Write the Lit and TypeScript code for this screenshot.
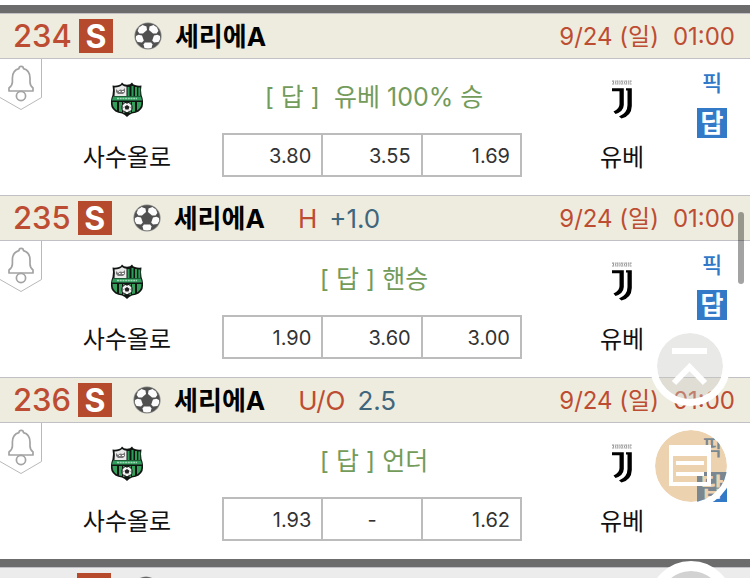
import { LitElement, html, css, svg, nothing } from "lit";
import { customElement, property } from "lit/decorators.js";

interface Match {
  no: number;
  league: string;
  rule?: string;
  value?: string;
  date: string;
  time: string;
  home: string;
  away: string;
  answer: string;
  odds: string[];
}

const base = { league: "세리에A", date: "9/24 (일)", time: "01:00", home: "사수올로", away: "유베" };

const matches: Match[] = [
  { ...base, no: 234, answer: "[ 답 ]  유베 100% 승", odds: ["3.80", "3.55", "1.69"] },
  { ...base, no: 235, rule: "H", value: "+1.0", answer: "[ 답 ] 핸승", odds: ["1.90", "3.60", "3.00"] },
  { ...base, no: 236, rule: "U/O", value: "2.5", answer: "[ 답 ] 언더", odds: ["1.93", "-", "1.62"] },
];

const ball = svg`<svg class="ball" viewBox="0 0 28 28" aria-hidden="true">
  <circle cx="14" cy="14" r="13.600" fill="#8c8c8a"/>
  <circle cx="14" cy="14" r="12.800" fill="#505050"/>
  <g fill="#fcfcfc">
    <path d="M5 5.500 8.500 3 12.500 4.500 13 8 9 11.500 5.500 11.500 3.600 9Z"/>
    <path d="M23 5.500 19.500 3 15.500 4.500 15 8 19 11.500 22.500 11.500 24.400 9Z"/>
    <path d="M2 14 4.500 12.800 8 13.500 9.800 18.500 8 20.500 3.500 20 1.800 17Z"/>
    <path d="M26 14 23.500 12.800 20 13.500 18.200 18.500 20 20.500 24.500 20 26.200 17Z"/>
    <path d="M10.800 20.500H17.200L18.500 22.500 17.500 26 14 26.600 10.500 26 9.500 22.500Z"/>
  </g>
</svg>`;

const bell = svg`<svg viewBox="0 0 42 52" width="42" height="52" aria-hidden="true" fill="none">
  <path d="M41.500 0V38.500L21 50.500 0 38.500" stroke="#b9b9bb"/>
  <g stroke="#a3a3a3" stroke-width="1.700">
    <path d="M19 9.600C19 6.600 23.400 6.600 23.400 9.600 28 10.800 30 14.500 30 19V23C30 26 31 27.500 33 29V32H9V29C11 27.500 12.400 26 12.400 23V19C12.400 14.500 14.400 10.800 19 9.600Z" stroke-linejoin="round"/>
    <circle cx="21" cy="37" r="4.600"/>
  </g>
</svg>`;

const sassuolo = svg`<svg viewBox="0 0 34 35" width="34" height="35" role="img" aria-label="사수올로">
  <path d="M2.500 3.500Q6 4 9 3 11 2.500 12 .5 13.500 2.800 17 2.800 20.500 2.800 22 .5 23 2.500 25 3 28 4 31.500 3.500 30.500 8 31.500 13 34 19 32.500 25 30 30.500 22 31.500 19 32.500 17 35 15 32.500 12 31.500 4 30.500 1.500 25 0 19 2.500 13 3.500 8 2.500 3.500Z" fill="#101512"/>
  <path d="M4.500 5.500Q10 5 12 3 14 4.500 16.500 4.800V14H4.500Q5.300 9 4.500 5.500Z" fill="#e9eae9"/>
  <path d="M6 7 8 9 10 7.500 13 8 15 6V10L13 12H8L6 10ZM8 13V11M13 13V11" fill="#777"/>
  <path d="M9 9.500H10.500M12 9.500H14" stroke="#fff"/>
  <path d="M18.500 5V14M22.500 4V14M26 5V14M29.300 5.500V14" stroke="#2c9c57" stroke-width="2"/>
  <path d="M3 14.500H31L32 18.500H2Z" fill="#2f9d5b"/>
  <path d="M7 16.500H27" stroke="#a4d6b8" stroke-width="1.600" stroke-dasharray="2 .7"/>
  <path d="M2.500 20H7V28.500Q2.500 26 2.500 20ZM9 20H12V30L9 29.500ZM22 20H25V29.500L22 30ZM27 20H31.500Q31.500 26 27 28.500ZM13 20H21V31H13Z" fill="#34a05c"/>
  <circle cx="17" cy="25.500" r="5.200" fill="#f4f4f4" stroke="#111"/>
  <path d="M17 23 19.500 24.800 18.500 27.500H15.500L14.500 24.800ZM15.500 20.500H18.500L17 22ZM12.500 24V27L13.500 25.500ZM21.500 24V27L20.500 25.500ZM14 29.500 15 28.500 16 30.500ZM20 29.500 19 28.500 18 30.500Z" fill="#222"/>
</svg>`;

const juventus = svg`<svg viewBox="0 0 20 39" width="20" height="39" role="img" aria-label="유베">
  <path d="M0 1.200H20M0 4H20" stroke="#999" stroke-width="1.200" stroke-dasharray="2 .8 1 .6"/>
  <path d="M1 2.600H19" stroke="#888" stroke-width="1.600" stroke-dasharray=".9 1.300"/>
  <path d="M0 8.200H11.800V25Q11.500 31.500 3.500 34L1.500 31.500Q7.500 29 7.500 24V11.200H0Z"/>
  <path d="M14 8.200H19.800V26Q19.500 36 9.500 38.500L7 36.500Q15.500 33 15.500 25V10.500H14Z"/>
</svg>`;

@customElement("match-header")
export class MatchHeader extends LitElement {
  @property({ attribute: false }) match?: Match;

  static styles = css`
    :host {
      display: flex;
      align-items: center;
      height: 44px;
      padding: 0 15px 0 13px;
      background: #eeecdf;
      border-top: 1px solid #c1c0c4;
      border-bottom: 1px solid #c1c0c4;
      color: #bd4d32;
      font-size: 24px;
      line-height: 32px;
      white-space: pre;
    }
    :host([muted]) { background: #ececec; }
    .no { min-width: 57px; font-size: 31px; font-weight: 500; }
    .badge {
      display: grid;
      place-items: center;
      width: 34px;
      height: 34px;
      margin: 0 21px 0 7px;
      background: #b54a2d;
      color: #fff;
      font-size: 32px;
      font-weight: 700;
      line-height: 36px;
    }
    .ball { width: 28px; height: 28px; margin-right: 13px; }
    .league, .rule, .value { padding-top: 2px; font-size: 26px; }
    .league { color: #000; font-weight: 700; }
    .rule { margin-left: 33px; }
    .value { margin-left: 12px; color: #40667c; }
    .when { margin-left: auto; display: flex; align-items: baseline; gap: 14px; padding-top: 2px; }
  `;

  render() {
    const m = this.match;
    return html`<span class="no">${m?.no}</span><span class="badge">${m ? "S" : nothing}</span>${ball}
      ${m ? html`<span class="league">${m.league}</span>` : nothing}
      ${m?.rule ? html`<span class="rule">${m.rule}</span><span class="value">${m.value}</span>` : nothing}
      ${m ? html`<span class="when"><span>${m.date}</span><span>${m.time}</span></span>` : nothing}`;
  }
}

@customElement("match-row")
export class MatchRow extends LitElement {
  @property({ attribute: false }) match!: Match;

  static styles = css`
    :host { display: block; }
    button {
      display: block;
      padding: 0;
      border: 0;
      background: none;
      font: inherit;
      color: inherit;
      cursor: pointer;
    }
    .body {
      display: grid;
      grid-template-columns: 42px 180fr 300fr 152fr 76px;
      height: 136px;
      background: #fff;
    }
    .alarm { align-self: start; }
    .team, .middle {
      display: grid;
      grid-template-rows: 74px 44px;
      justify-items: center;
      align-items: center;
      align-content: start;
    }
    .team { font-size: 24px; color: #111; }
    .home { padding-right: 10px; }
    .away { padding-left: 48px; }
    .logo { display: grid; padding-top: 6px; }
    .answer { margin: 0; padding: 0 0 2px 4px; color: #739b5a; font-size: 25px; white-space: pre; }
    .odds {
      width: 100%;
      height: 44px;
      table-layout: fixed;
      border-collapse: collapse;
      color: #333;
      font-size: 20px;
    }
    .odds td {
      padding: 2px 10px 0;
      border: 2px solid #bcbcbc;
      text-align: right;
    }
    .odds .none { text-align: center; }
    .picks {
      display: flex;
      flex-direction: column;
      align-items: center;
      gap: 10px;
      padding-top: 9px;
    }
    .picks .pick { color: #3179c8; font-size: 22px; line-height: 30px; font-weight: 500; }
    .picks .reply {
      width: 30px;
      height: 30px;
      background: #3279c7;
      color: #fff;
      font-size: 25px;
      line-height: 30px;
      font-weight: 700;
    }
  `;

  render() {
    const m = this.match;
    return html`<match-header .match=${m}></match-header>
      <div class="body">
        <button class="alarm" aria-label="알림">${bell}</button>
        <div class="team home"><span class="logo">${sassuolo}</span><span>${m.home}</span></div>
        <div class="middle">
          <p class="answer">${m.answer}</p>
          <table class="odds"><tbody><tr>
            ${m.odds.map((o) => html`<td class=${o === "-" ? "none" : "odd"}>${o}</td>`)}
          </tr></tbody></table>
        </div>
        <div class="team away"><span class="logo">${juventus}</span><span>${m.away}</span></div>
        <div class="picks"><button class="pick">픽</button><button class="reply">답</button></div>
      </div>`;
  }
}

@customElement("app-root")
export class AppRoot extends LitElement {
  static styles = css`
    :host {
      display: block;
      position: relative;
      height: 100vh;
      overflow: hidden;
      background: #fff;
      font-family: Inter, "Noto Sans CJK KR", sans-serif;
    }
    .list { padding-top: 5px; }
    .bar { height: 8px; background: #6c6c6c; }
    .thumb {
      position: absolute;
      top: 212px;
      right: 6px;
      width: 6px;
      height: 72px;
      border-radius: 3px;
      background: rgba(0, 0, 0, 0.36);
    }
    .float {
      position: absolute;
      box-sizing: border-box;
      padding: 0;
      border: 0 solid #fff;
      border-radius: 50%;
      background-clip: padding-box;
      cursor: pointer;
    }
    .float svg { display: block; width: 100%; height: 100%; }
    .top { top: 326px; right: 20px; width: 80px; height: 80px; border-width: 7px; background-color: rgba(200, 200, 196, 0.4); }
    .write {
      top: 424px;
      right: 17px;
      width: 84px;
      height: 84px;
      border-width: 6px;
      background-color: rgba(214, 152, 75, 0.44);
    }
    .down { top: 561px; right: 17px; width: 84px; height: 84px; border-width: 10px; background-color: #d2d2d2; }
  `;

  render() {
    return html`
      <main class="list">
        <div class="bar"></div>
        ${matches.map((m) => html`<match-row .match=${m}></match-row>`)}
        <div class="bar"></div>
        <match-header muted></match-header>
      </main>
      <div class="thumb"></div>
      <button class="float top" aria-label="맨 위로">
        <svg viewBox="0 0 66 66" fill="none" stroke="#fff" stroke-width="6">
          <path d="M15 18H50"/><path d="M17 50 32.500 34 48 50"/>
        </svg>
      </button>
      <button class="float write" aria-label="글쓰기">
        <svg viewBox="0 0 72 72" fill="#fff">
          <path fill-rule="evenodd" d="M14 15H56V56H14ZM18 26V52H52V26Z"/>
          <path d="M21 31H49V35H21ZM21 42H49V46H21Z"/>
        </svg>
      </button>
      <button class="float down" aria-label="맨 아래로"></button>
    `;
  }
}
